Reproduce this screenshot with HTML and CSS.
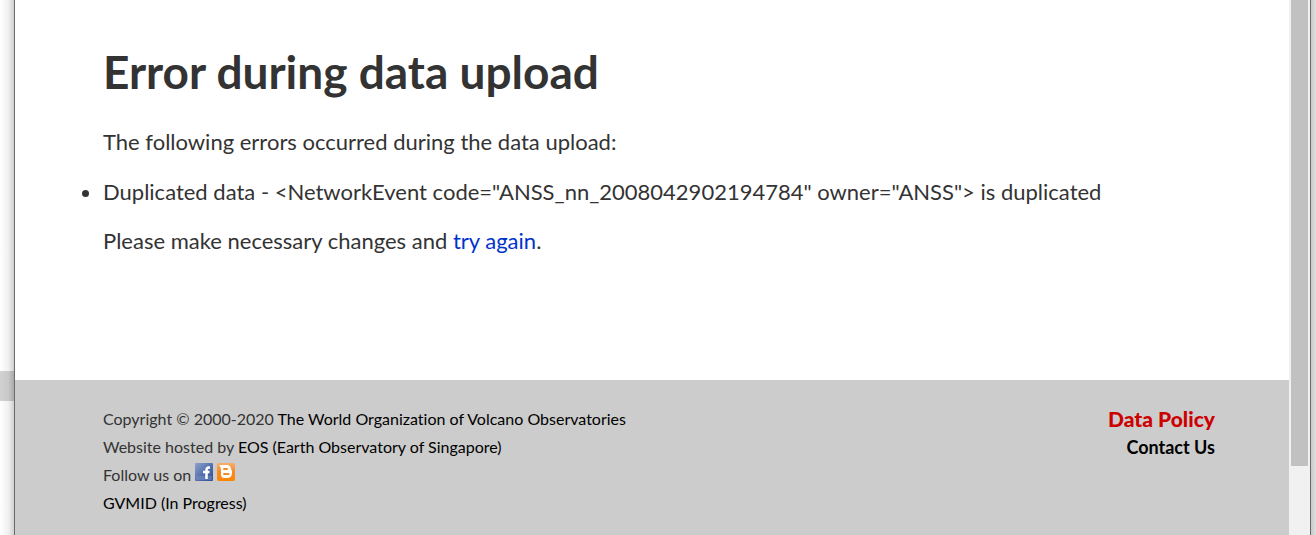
FILE: index.html
```html
<!DOCTYPE html>
<html lang="en">
<head>
<meta charset="utf-8">
<title>Error during data upload</title>
<link rel="stylesheet" href="styles.css">
</head>
<body>
<div class="gutter"><div class="gutter-mark"></div></div>
<div class="window">
  <div class="page">
    <main class="content">
      <h1>Error during data upload</h1>
      <p>The following errors occurred during the data upload:</p>
      <ul>
        <li>Duplicated data - &lt;NetworkEvent code="ANSS_nn_2008042902194784" owner="ANSS"&gt; is duplicated</li>
      </ul>
      <p>Please make necessary changes and <a href="#">try again</a>.</p>
    </main>
    <footer class="footer">
      <div class="credits">
        <div>Copyright © 2000-2020 <a href="#">The World Organization of Volcano Observatories</a></div>
        <div>Website hosted by <a href="#">EOS (Earth Observatory of Singapore)</a></div>
        <div class="follow">Follow us on
          <a href="#" aria-label="Facebook"><svg class="social" viewBox="0 0 18 18"><defs><linearGradient id="fb" x1="0" y1="0" x2="1" y2="1"><stop offset="0" stop-color="#8da3cc"/><stop offset=".5" stop-color="#5871ae"/><stop offset="1" stop-color="#304b8c"/></linearGradient></defs><rect width="18" height="18" rx="1" fill="url(#fb)"/><path d="M1 13h16v4H1z" fill="#7891c6" opacity=".5"/><path d="M15 4.500h-1q-2.500 0-2.500 2.500v9M8 9h6.500" fill="none" stroke="#fff" stroke-width="2.500"/></svg></a>
          <a href="#" aria-label="Blogger"><svg class="social" viewBox="0 0 18 18"><defs><linearGradient id="bl" x1="0" y1="0" x2="0" y2="1"><stop offset="0" stop-color="#f9ad68"/><stop offset=".5" stop-color="#f78a22"/><stop offset="1" stop-color="#ff8500"/></linearGradient></defs><rect width="18" height="18" rx="2" fill="url(#bl)"/><path d="M2 2h9q3 1 3 4l1 2v2q0 5-5 5H7q-3 0-3-4V6Q4 4 2 2z" fill="#fff"/><path d="M7 6h3M7 11h4.500" stroke="#f78a22" stroke-width="2" stroke-linecap="round"/></svg></a>
        </div>
        <div><a href="#">GVMID (In Progress)</a></div>
      </div>
      <nav class="links">
        <a class="policy" href="#">Data Policy</a>
        <a class="contact" href="#">Contact Us</a>
      </nav>
    </footer>
  </div>
  <div class="scrollbar"><div class="thumb"></div></div>
</div>
<div class="edge"></div>
</body>
</html>
```
FILE: styles.css
```css
* { box-sizing: border-box; }
body {
  margin: 0;
  min-height: 100vh;
  display: flex;
  background: #fff;
  color: #333;
  font-family: Lato, sans-serif;
  font-variant-ligatures: none;
}
a { text-decoration: none; }
.gutter { width: 14px; padding-top: 371px; background: linear-gradient(to right, #fff, #f0f0f0 60%, #d0d0d0); }
.gutter-mark { height: 30px; background: linear-gradient(to right, #d2d2d2, #c8c8c8 60%, #aaa); }
.window { flex: 1; display: flex; border: solid #6b6b6b; border-width: 0 1px; }
.page { flex: 1; display: flex; flex-direction: column; }
.content { padding: 43px 88px 0; font-size: 22px; line-height: 32px; flex: 1; }
h1 { margin: 0; font-size: 46px; line-height: 58px; font-weight: 700; }
p { margin: 0; }
h1 + p { margin-top: 25px; }
ul { margin: 18px 0 17px; padding: 0; }
.content a { color: #03c; }
.footer {
  display: flex;
  justify-content: space-between;
  padding: 25px 74px 18px 88px;
  background: #ccc;
  font-size: 16px;
  line-height: 28px;
}
.footer a { color: #000; }
.social { width: 18px; height: 18px; }
.links { display: flex; flex-direction: column; align-items: flex-end; font-weight: 700; }
.footer .policy { color: #c00; font-size: 21px; font-weight: 900; }
.links .contact { font-size: 18px; }
.scrollbar { width: 21px; padding: 0 2px; background: #f1f1f1; }
.thumb { height: 466px; background: #c1c1c1; }
.edge { width: 5px; background: linear-gradient(to right, #c8c8c8, #e0e0e0); }
```
